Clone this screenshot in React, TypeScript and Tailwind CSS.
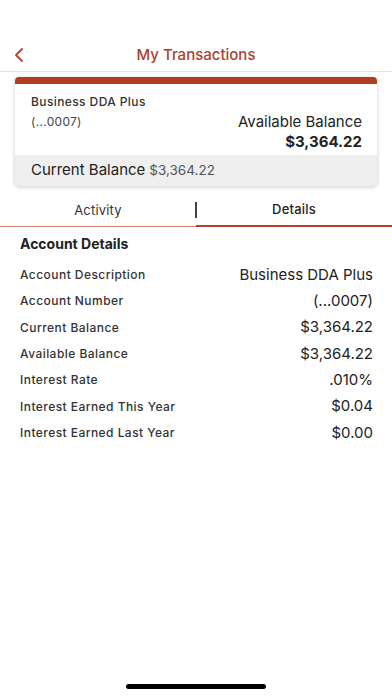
import { ChevronLeft } from "lucide-react";

const rows = [
    { label: "Account Description", value: "Business DDA Plus" },
    { label: "Account Number", value: "(...0007)" },
    { label: "Current Balance", value: "$3,364.22" },
    { label: "Available Balance", value: "$3,364.22" },
    { label: "Interest Rate", value: ".010%" },
    { label: "Interest Earned This Year", value: "$0.04" },
    { label: "Interest Earned Last Year", value: "$0.00" },
];

export default function App() {
    return (
        <div className="relative w-[392px] h-[696px] bg-white overflow-hidden font-['Inter',sans-serif] text-[#222]">
            {/* header */}
            <div className="h-[72px] pt-[40px] border-b border-[#e2e2e2] flex items-center relative">
                <ChevronLeft className="absolute left-[7px] top-[43px] w-[24px] h-[24px] text-[#b5412a]" strokeWidth={1.8} />
                <div className="w-full text-center text-[15px] text-[#a9432d] font-medium">
                    My Transactions
                </div>
            </div>

            {/* balance card */}
            <div className="mx-[15px] mt-[5px] rounded-[4px] bg-white shadow-[0_1px_4px_rgba(0,0,0,0.22)] overflow-hidden">
                <div className="h-[7px] bg-[#b23c22]" />
                <div className="px-[16px] pt-[10px] pb-[3px]">
                    <div className="text-[12px] leading-[16px] text-[#333] font-medium tracking-[0.4px]">Business DDA Plus</div>
                    <div className="flex justify-between items-start mt-[2px]">
                        <div className="text-[12px] leading-[20px] text-[#444] tracking-[0.3px]">(...0007)</div>
                        <div className="text-right -mr-[1px]">
                            <div className="text-[15px] text-[#222] leading-[20px]">Available Balance</div>
                            <div className="text-[15px] font-bold text-[#222] leading-[20px]">$3,364.22</div>
                        </div>
                    </div>
                </div>
                <div className="h-[31px] bg-[#efefef] px-[16px] flex items-center gap-[4px]">
                    <span className="text-[15px] text-[#222]">Current Balance</span>
                    <span className="text-[13.5px] text-[#555]">$3,364.22</span>
                </div>
            </div>

            {/* tabs */}
            <div className="mt-[9px] flex h-[32px] relative">
                <div className="flex-1 flex items-center justify-center border-b border-[#c9806f] text-[13px] text-[#333] tracking-[0.2px]">
                    Activity
                </div>
                <div className="absolute left-[195px] top-[7px] w-[1.5px] h-[16px] bg-[#444]" />
                <div className="flex-1 flex items-center justify-center border-b-[2px] border-[#b5412a] text-[13px] text-[#222] font-medium tracking-[0.2px]">
                    Details
                </div>
            </div>

            {/* account details */}
            <div className="px-[20px] pt-[7px]">
                <div className="text-[14px] leading-[20px] font-bold text-[#222] mb-[8px]">Account Details</div>
                <div className="flex flex-col">
                    {rows.map((row) => (
                        <div key={row.label} className="flex justify-between items-center h-[26.3px]">
                            <span className="text-[12px] font-medium text-[#333] tracking-[0.45px]">{row.label}</span>
                            <span className="text-[15px] text-[#222] -mr-[1px]">{row.value}</span>
                        </div>
                    ))}
                </div>
            </div>

            {/* home indicator */}
            <div className="absolute left-[126px] bottom-[7px] w-[140px] h-[5px] rounded-full bg-black" />
        </div>
    );
}
